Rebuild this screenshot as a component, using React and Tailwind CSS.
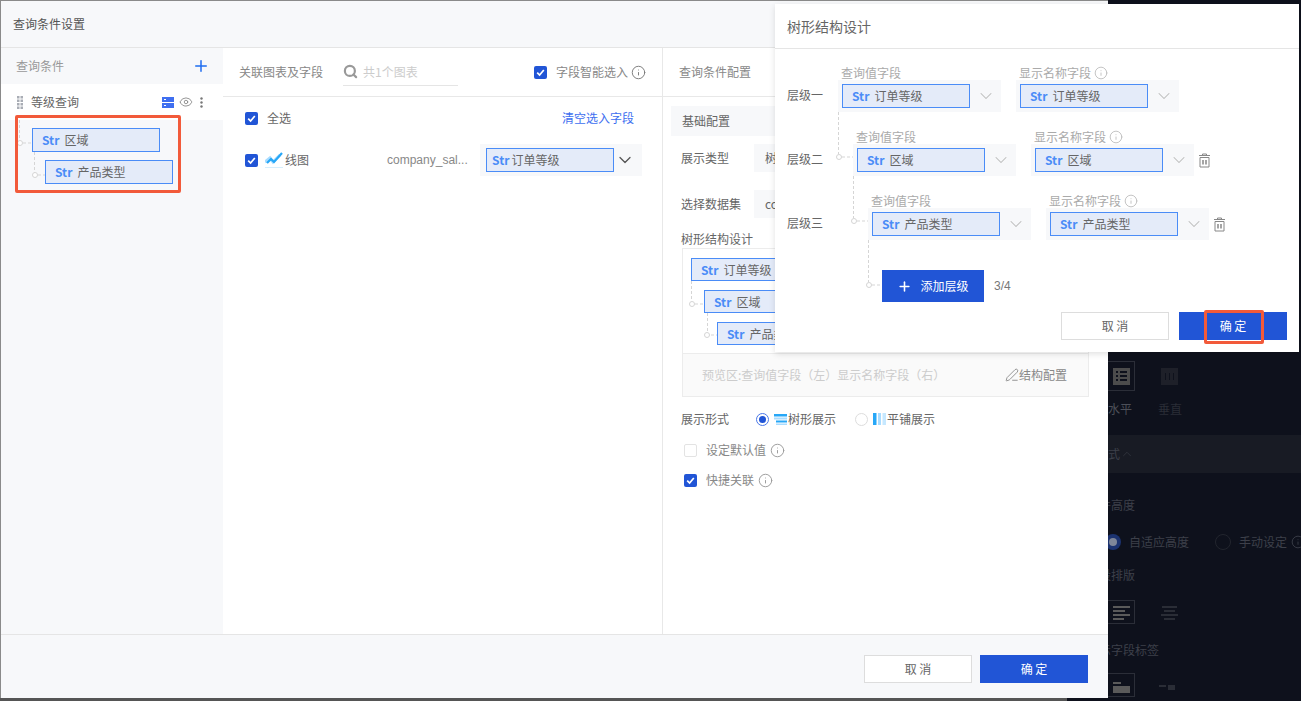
import { ChevronDown, ChevronUp, Eye, Info, PenLine, Plus, Search } from 'lucide-react'

function Checkbox({ checked = true }) {
  if (!checked) {
    return <span className="block h-[13px] w-[13px] shrink-0 rounded-[2px] border border-[#e3e3e3] bg-white" />
  }
  return (
    <span className="flex h-[13px] w-[13px] shrink-0 items-center justify-center rounded-[2px] bg-[#2155d6]">
      <svg width="9" height="9" viewBox="0 0 9 9" fill="none">
        <path d="M1.2 4.6 3.6 7 7.8 2" stroke="#fff" strokeWidth="1.7" />
      </svg>
    </span>
  )
}

function Tag({ text, className = 'w-[128px] h-[24px] pl-[9px]', gap = 'ml-[5px]' }) {
  return (
    <div className={`flex shrink-0 items-center border border-[#4a8cf7] bg-[#e4ebf9] text-[12px] text-[#666] ${className}`}>
      <span className="font-bold text-[#4a8cf7]">Str</span>
      <span className={`whitespace-nowrap ${gap}`}>{text}</span>
    </div>
  )
}

function Field({ caption, info, text }) {
  return (
    <div className="w-[163px]">
      <div className="flex h-[14px] items-center pl-[3px] text-[12px] leading-[14px] text-[#aaa]">
        {caption}
        {info ? <Info className="ml-[3px] h-[14px] w-[14px] text-[#bbb]" strokeWidth={1.5} /> : null}
      </div>
      <div className="flex h-[32px] items-center bg-[#f7f8fa] pl-[4px]">
        <Tag text={text} />
        <div className="flex flex-1 justify-center">
          <ChevronDown className="h-[20px] w-[20px] text-[#bbb]" strokeWidth={1.25} />
        </div>
      </div>
    </div>
  )
}

function TrashIcon() {
  return (
    <svg width="13" height="15" viewBox="0 0 13 15" fill="none" stroke="#888" strokeWidth="1">
      <path d="M1 2.5h11M4.5 2.5V1h4v1.5" />
      <path d="M2 4.5h9v9.5H2z" />
      <path d="M5 7v4.5M8 7v4.5" strokeWidth="1.5" />
    </svg>
  )
}

function Level({ label, labelWidth, text, trash }) {
  return (
    <div className="flex items-end">
      <div className={`flex h-[32px] items-center pb-[2px] text-[12px] text-[#666] ${labelWidth}`}>{label}</div>
      <div className="flex gap-[15px]">
        <Field caption="查询值字段" text={text} />
        <Field caption="显示名称字段" info text={text} />
      </div>
      {trash ? (
        <div className="ml-[4px] flex h-[32px] items-center">
          <TrashIcon />
        </div>
      ) : null}
    </div>
  )
}

function Connectors({ className, width, height, paths, dots }) {
  return (
    <svg className={`pointer-events-none absolute ${className}`} width={width} height={height} fill="none">
      {paths.map((d) => (
        <path key={d} d={d} stroke="#d5d5d5" strokeDasharray="3 2" />
      ))}
      {dots.map(([cx, cy]) => (
        <circle key={`${cx}-${cy}`} cx={cx} cy={cy} r="2.5" fill="#fff" stroke="#d5d5d5" />
      ))}
    </svg>
  )
}

function LineChartIcon() {
  return (
    <svg width="18" height="16" viewBox="0 0 18 16" fill="none">
      <path d="M0 10 5 6l3 4 7-7" stroke="#a9dcff" strokeWidth="3" />
      <path d="M2 11 6 7l3 3 8-9" stroke="#27a7f7" strokeWidth="2.2" />
      <path d="M0 15.5h18" stroke="#d6eefc" />
    </svg>
  )
}

function RadioOption({ checked, icon, label }) {
  return (
    <div className="flex items-center">
      <span className={`flex h-[13px] w-[13px] items-center justify-center rounded-full border ${checked ? 'border-[#4a78e8]' : 'border-[#ddd]'}`}>
        {checked ? <span className="h-[7px] w-[7px] rounded-full bg-[#2155d6]" /> : null}
      </span>
      <span className="ml-[5px]">{icon}</span>
      <span className="ml-px text-[12px] text-[#666]">{label}</span>
    </div>
  )
}

function TreeDisplayIcon() {
  return (
    <svg width="13" height="11" viewBox="0 0 13 11">
      <rect width="13" height="2.5" fill="#27a7f7" />
      <rect y="3.5" width="13" height="2" fill="#a9dcff" />
      <rect x="2" y="6.5" width="11" height="2" fill="#27a7f7" />
      <rect x="2" y="9.5" width="11" height="1.5" fill="#a9dcff" />
    </svg>
  )
}

function TileDisplayIcon() {
  return (
    <svg width="13" height="12" viewBox="0 0 13 12">
      <rect width="3.5" height="12" fill="#27a7f7" />
      <rect x="5" width="3" height="12" fill="#a9dcff" />
      <rect x="9.5" width="3.5" height="12" fill="#c6e8ff" />
    </svg>
  )
}

function DarkIcon({ bars, color = '#5a5a5a', slits = [] }) {
  return (
    <svg width="17" height="17" viewBox="0 0 17 17">
      {bars.map(([x, y, w, h]) => (
        <rect key={`${x}-${y}`} x={x} y={y} width={w} height={h} fill={color} />
      ))}
      {slits.map(([x, y, w, h]) => (
        <rect key={`s${x}-${y}`} x={x} y={y} width={w} height={h} fill="#0e111c" />
      ))}
    </svg>
  )
}

function DarkPanel() {
  return (
    <div className="flex h-[701px] flex-col pt-[361px] pl-[1087px] text-[12px] text-[#3d404a]">
      <div className="ml-[20px] flex items-center">
        <div className="flex h-[30px] w-[28px] items-center justify-center border border-[#2b2e38]">
          <DarkIcon
            bars={[[0, 0, 17, 17]]}
            color="#4c4c4c"
            slits={[[3, 3, 2, 2], [7, 3, 7, 2], [3, 7, 2, 2], [7, 7, 7, 2], [3, 11, 2, 2], [7, 11, 7, 2]]}
          />
        </div>
        <div className="ml-[26px]">
          <DarkIcon
            bars={[[0, 0, 17, 17]]}
            color="#1e2029"
            slits={[[4, 5, 1, 7], [8, 5, 1, 7], [12, 5, 1, 7]]}
          />
        </div>
      </div>
      <div className="ml-[21px] mt-[10px] flex h-[16px] items-center">
        <span className="text-[#4c4f58]">水平</span>
        <span className="ml-[26px] text-[#2a2d36]">垂直</span>
      </div>
      <div className="mt-[18px] flex h-[38px] items-center bg-[#181b24] pl-[9px]">
        <span>样式</span>
        <ChevronUp className="h-[14px] w-[14px] text-[#3d404a]" strokeWidth={1} />
      </div>
      <div className="mt-[24px] h-[16px] leading-[16px]">组件高度</div>
      <div className="mt-[20px] flex h-[18px] items-center whitespace-nowrap pl-[18px]">
        <span className="flex h-[16px] w-[16px] shrink-0 items-center justify-center rounded-full bg-[#1c3370]">
          <span className="h-[8px] w-[8px] rounded-full bg-[#7f8799]" />
        </span>
        <span className="ml-[8px] shrink-0 text-[#3d404a]">自适应高度</span>
        <span className="ml-[26px] h-[16px] w-[16px] shrink-0 rounded-full border border-[#22252e]" />
        <span className="ml-[8px] shrink-0">手动设定</span>
        <Info className="ml-[4px] h-[14px] w-[14px] shrink-0" strokeWidth={1.5} />
      </div>
      <div className="mt-[16px] h-[16px] leading-[16px]">字段排版</div>
      <div className="ml-[20px] mt-[17px] flex items-center">
        <div className="flex h-[24px] w-[28px] items-center justify-center border border-[#2b2e38]">
          <DarkIcon bars={[[0, 2, 17, 2], [0, 6, 12, 2], [0, 10, 17, 2], [0, 14, 11, 2]]} />
        </div>
        <div className="ml-[26px]">
          <DarkIcon bars={[[1, 2, 15, 2], [3, 6, 11, 2], [0, 10, 17, 2], [3, 14, 11, 2]]} color="#2a2d36" />
        </div>
      </div>
      <div className="mt-[18px] h-[16px] leading-[16px]">显示字段标签</div>
      <div className="ml-[20px] mt-[15px] flex items-center">
        <div className="flex h-[24px] w-[28px] items-center justify-center border border-[#2b2e38]">
          <DarkIcon bars={[[0, 5, 8, 2], [0, 9, 17, 7]]} />
        </div>
        <div className="ml-[24px]">
          <DarkIcon bars={[[0, 8, 7, 2], [9, 8, 7, 5]]} color="#2a2d36" />
        </div>
      </div>
    </div>
  )
}

function QueryList() {
  return (
    <div className="relative w-[222px] shrink-0">
      <div className="flex h-[36px] items-center justify-between pl-[15px] pr-[13px] text-[12px] text-[#999]">
        查询条件
        <Plus className="h-[18px] w-[18px] text-[#1f6df0]" strokeWidth={2} />
      </div>
      <div className="flex h-[36px] items-center bg-white pl-[16px] pr-[20px] text-[12px] text-[#666]">
        <svg width="6" height="13" viewBox="0 0 6 13" fill="#a9adb5">
          <rect width="2.5" height="2.5" />
          <rect x="3.5" width="2.5" height="2.5" />
          <rect y="3.5" width="2.5" height="2.5" />
          <rect x="3.5" y="3.5" width="2.5" height="2.5" />
          <rect y="7" width="2.5" height="2.5" />
          <rect x="3.5" y="7" width="2.5" height="2.5" />
          <rect y="10.5" width="2.5" height="2.5" />
          <rect x="3.5" y="10.5" width="2.5" height="2.5" />
        </svg>
        <span className="ml-[8px]">等级查询</span>
        <svg className="ml-auto" width="12" height="11" viewBox="0 0 12 11" fill="#3f6ff0">
          <rect width="12" height="5" />
          <rect y="6" width="12" height="5" />
          <rect x="2" y="2" width="2" height="1" fill="#fff" />
          <rect x="2" y="8" width="2" height="1" fill="#fff" />
        </svg>
        <Eye className="ml-[5px] h-[14px] w-[14px] text-[#888]" strokeWidth={1.5} />
        <svg className="ml-[7px]" width="3" height="11" viewBox="0 0 3 11" fill="#777">
          <circle cx="1.5" cy="1.5" r="1.2" />
          <circle cx="1.5" cy="5.5" r="1.2" />
          <circle cx="1.5" cy="9.5" r="1.2" />
        </svg>
      </div>
      <div className="pt-[8px]">
        <Tag text="区域" className="ml-[31px] h-[24px] w-[128px] pl-[9px]" />
        <Tag text="产品类型" className="ml-[44px] mt-[8px] h-[24px] w-[128px] pl-[9px]" />
      </div>
      <Connectors
        className="left-0 top-[72px]"
        width="50"
        height="70"
        paths={['M18.5 0V20', 'M22 23H31', 'M33.5 32V53', 'M37 55H44']}
        dots={[[19, 23], [34, 55]]}
      />
      <div className="absolute left-[14px] top-[67px] h-[78px] w-[166px] rounded-[2px] border-[3px] border-[#f25a3a]" />
    </div>
  )
}

function ChartFields() {
  return (
    <div className="w-[440px] shrink-0 border-r border-[#e8e8e8] bg-white text-[12px] text-[#666]">
      <div className="flex h-[49px] items-center border-b border-[#e8e8e8] pl-[16px]">
        <span className="text-[#888]">关联图表及字段</span>
        <div className="ml-[20px] flex h-[28px] w-[115px] items-center border-b border-[#e5e5e5]">
          <Search className="h-[15px] w-[15px] text-[#999]" strokeWidth={3.5} />
          <span className="ml-[5px] text-[#ccc]">共1个图表</span>
        </div>
        <div className="ml-[76px]">
          <Checkbox />
        </div>
        <span className="ml-[9px] text-[#888]">字段智能选入</span>
        <Info className="ml-[3px] h-[15px] w-[15px] text-[#777]" strokeWidth={1.5} />
      </div>
      <div className="flex h-[42px] items-center pl-[22px] pr-[28px]">
        <Checkbox />
        <span className="ml-[9px]">全选</span>
        <span className="ml-auto text-[#3d6ff0]">清空选入字段</span>
      </div>
      <div className="flex items-center pl-[22px] pt-[5px]">
        <Checkbox />
        <span className="ml-[7px]">
          <LineChartIcon />
        </span>
        <span className="ml-[2px]">线图</span>
        <span className="ml-[78px] w-[93px] font-['Liberation_Sans'] text-[#888]">company_sal...</span>
        <div className="flex h-[32px] w-[162px] items-center bg-[#f7f8fa] pl-[6px]">
          <Tag text="订单等级" className="h-[24px] w-[128px] pl-[5px]" gap="ml-[2px]" />
          <ChevronDown className="ml-px h-[20px] w-[20px] text-[#555]" strokeWidth={1.5} />
        </div>
      </div>
    </div>
  )
}

function ConditionConfig() {
  return (
    <div className="min-w-0 flex-1 bg-white text-[12px] text-[#666]">
      <div className="flex h-[49px] items-center border-b border-[#e8e8e8] pl-[16px] text-[#888]">查询条件配置</div>
      <div className="ml-[8px] mr-[8px] mt-[9px] flex h-[30px] items-center bg-[#f7f8fa] pl-[11px]">基础配置</div>
      <div className="ml-[18px] mr-[20px] mt-[8px] flex items-center">
        <span className="w-[73px]">展示类型</span>
        <div className="flex h-[28px] flex-1 items-center bg-[#f7f8fa] pl-[11px]">树形</div>
      </div>
      <div className="ml-[18px] mr-[20px] mt-[18px] flex items-center">
        <span className="w-[73px]">选择数据集</span>
        <div className="flex h-[28px] flex-1 items-center bg-[#f7f8fa] pl-[11px]">company_sales</div>
      </div>
      <div className="ml-[18px] mt-[12px] h-[18px] leading-[18px]">树形结构设计</div>
      <div className="relative ml-[19px] w-[407px] border border-[#ececec]">
        <div className="flex h-[104px] flex-col gap-[9px] pl-[8px] pt-[9px]">
          <Tag text="订单等级" className="h-[23px] w-[128px] pl-[9px]" />
          <Tag text="区域" className="ml-[13px] h-[23px] w-[128px] pl-[9px]" />
          <Tag text="产品类型" className="ml-[26px] h-[23px] w-[128px] pl-[9px]" />
        </div>
        <Connectors
          className="left-0 top-0"
          width="40"
          height="100"
          paths={['M8.5 32V52', 'M12 55H21', 'M24.5 64V84', 'M28 86H34']}
          dots={[[9, 55], [24, 86]]}
        />
        <div className="flex h-[43px] items-center justify-between border-t border-[#ececec] bg-[#fafafa] pl-[19px] pr-[21px]">
          <span className="text-[#ccc]">预览区:查询值字段（左）显示名称字段（右）</span>
          <span className="flex items-center text-[#888]">
            <PenLine className="h-[14px] w-[14px]" strokeWidth={1.5} />
            结构配置
          </span>
        </div>
      </div>
      <div className="ml-[18px] mt-[11px] flex h-[22px] items-center">
        <span className="w-[75px]">展示形式</span>
        <RadioOption checked icon={<TreeDisplayIcon />} label="树形展示" />
        <div className="ml-[19px]">
          <RadioOption icon={<TileDisplayIcon />} label="平铺展示" />
        </div>
      </div>
      <div className="ml-[21px] mt-[9px] flex h-[22px] items-center">
        <Checkbox checked={false} />
        <span className="ml-[9px] text-[#888]">设定默认值</span>
        <Info className="ml-[4px] h-[15px] w-[15px] text-[#999]" strokeWidth={1.5} />
      </div>
      <div className="ml-[21px] mt-[8px] flex h-[22px] items-center">
        <Checkbox />
        <span className="ml-[9px] text-[#888]">快捷关联</span>
        <Info className="ml-[4px] h-[15px] w-[15px] text-[#999]" strokeWidth={1.5} />
      </div>
    </div>
  )
}

function TreeDesignPopover() {
  return (
    <div className="absolute left-[775px] top-[4px] h-[348px] w-[524px] bg-white shadow-[0_2px_6px_rgba(0,0,0,0.12)]">
      <div className="flex h-[45px] items-center border-b border-[#e5e5e5] pl-[12px] text-[14px] text-[#666]">树形结构设计</div>
      <div className="flex flex-col gap-[18px] pl-[12px] pt-[17px]">
        <Level label="层级一" labelWidth="w-[51px]" text="订单等级" />
        <Level label="层级二" labelWidth="w-[66px]" text="区域" trash />
        <Level label="层级三" labelWidth="w-[81px]" text="产品类型" trash />
      </div>
      <div className="ml-[107px] mt-[30px] flex items-center">
        <div className="flex h-[32px] w-[102px] items-center justify-center bg-[#2155d6] text-[12px] text-white">
          <Plus className="h-[15px] w-[15px]" strokeWidth={2.5} />
          <span className="ml-[8px]">添加层级</span>
        </div>
        <span className="ml-[10px] font-['Liberation_Sans'] text-[12px] text-[#777]">3/4</span>
      </div>
      <div className="mr-[12px] mt-[10px] flex justify-end gap-[10px] text-[12px]">
        <div className="flex h-[28px] w-[108px] items-center justify-center border border-[#ddd] bg-white text-[#666]">取 消</div>
        <div className="flex h-[28px] w-[108px] items-center justify-center bg-[#2155d6] text-white">确 定</div>
      </div>
      <Connectors
        className="left-0 top-0"
        width="110"
        height="300"
        paths={['M63.5 108V150', 'M67 153H78', 'M78.5 172V214', 'M82 217H93', 'M93.5 236V278', 'M97 281H107']}
        dots={[[64, 153], [79, 217], [94, 281]]}
      />
      <div className="absolute left-[429px] top-[306px] h-[34px] w-[60px] rounded-[2px] border-[3px] border-[#f25a3a]" />
    </div>
  )
}

export default function App() {
  return (
    <div className="relative h-[701px] w-[1301px] overflow-hidden bg-[#0e111c] font-['Noto_Sans_CJK_SC','Liberation_Sans',sans-serif]">
      <DarkPanel />
      <div className="absolute bottom-0 left-0 h-[3px] w-[1067px] bg-[#555]" />
      <div className="absolute left-0 top-0 flex h-[698px] w-[1108px] flex-col border-l border-t border-[#8a8a8a] bg-[#f7f8fa]">
        <div className="flex h-[47px] shrink-0 items-center border-b border-[#e5e5e5] pl-[12px] text-[12px] text-[#555]">查询条件设置</div>
        <div className="flex min-h-0 flex-1">
          <QueryList />
          <ChartFields />
          <ConditionConfig />
        </div>
        <div className="flex h-[64px] shrink-0 items-start justify-end gap-[8px] border-t border-[#e5e5e5] pr-[20px] pt-[20px] text-[12px]">
          <div className="flex h-[28px] w-[108px] items-center justify-center border border-[#ddd] bg-white text-[#666]">取 消</div>
          <div className="flex h-[28px] w-[108px] items-center justify-center bg-[#2155d6] text-white">确 定</div>
        </div>
      </div>
      <TreeDesignPopover />
    </div>
  )
}
